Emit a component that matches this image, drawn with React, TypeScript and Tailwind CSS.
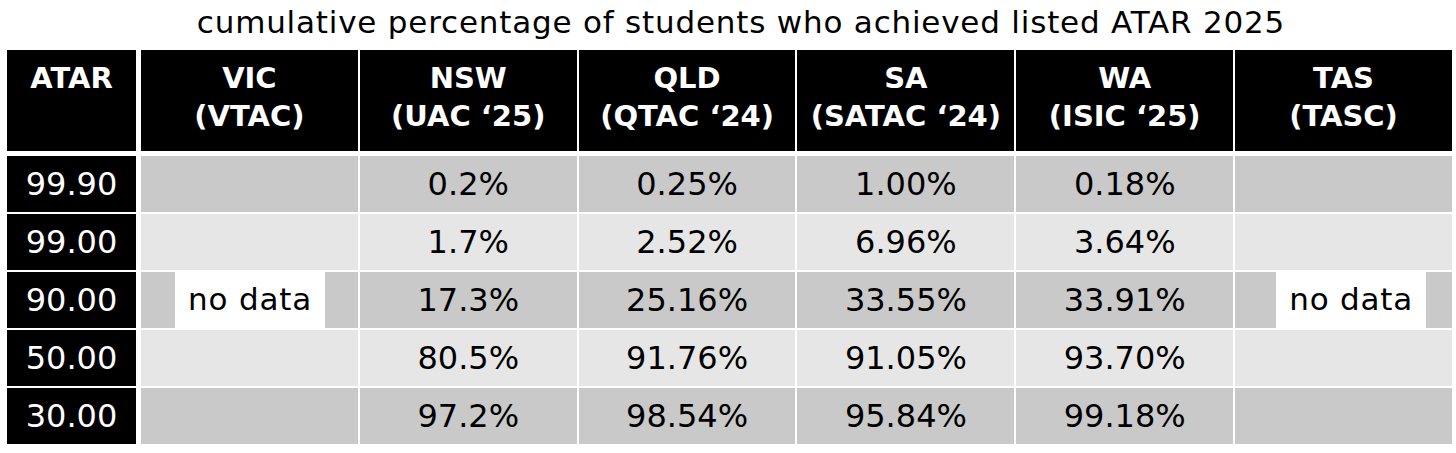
import React from "react";

const heads = [
  ["VIC", "(VTAC)"],
  ["NSW", "(UAC \u201825)"],
  ["QLD", "(QTAC \u201824)"],
  ["SA", "(SATAC \u201824)"],
  ["WA", "(ISIC \u201825)"],
  ["TAS", "(TASC)"],
];

const rows: { atar: string; vals: string[] }[] = [
  { atar: "99.90", vals: ["", "0.2%", "0.25%", "1.00%", "0.18%", ""] },
  { atar: "99.00", vals: ["", "1.7%", "2.52%", "6.96%", "3.64%", ""] },
  { atar: "90.00", vals: ["ND", "17.3%", "25.16%", "33.55%", "33.91%", "ND2"] },
  { atar: "50.00", vals: ["", "80.5%", "91.76%", "91.05%", "93.70%", ""] },
  { atar: "30.00", vals: ["", "97.2%", "98.54%", "95.84%", "99.18%", ""] },
];

const sans = '"DejaVu Sans", "Liberation Sans", sans-serif';

export default function App() {
  return (
    <div className="w-[1456px] h-[453px] bg-white text-black" style={{ fontFamily: sans }}>
      <div className="h-[50px] pt-[2px] pl-[26px] text-center text-[31px] leading-[40px] tracking-[0.8px] whitespace-nowrap">
        cumulative percentage of students who achieved listed ATAR 2025
      </div>
      <div className="ml-[7px] w-[1445px]">
        {/* header */}
        <div className="flex h-[101px]">
          <div className="w-[129px] bg-black text-white font-bold text-[29px] leading-[38px] text-center pt-[9px]">
            ATAR
          </div>
          <div className="ml-[5px] flex flex-1 gap-[2px]">
            {heads.map((h) => (
              <div
                key={h[0]}
                className="flex-1 bg-black text-white font-bold text-[29px] leading-[38px] text-center pt-[9px] whitespace-nowrap"
              >
                <div>{h[0]}</div>
                <div>{h[1]}</div>
              </div>
            ))}
          </div>
        </div>
        {/* body */}
        <div className="mt-[5px] flex flex-col gap-[2px]">
          {rows.map((r, i) => {
            const bg = i % 2 === 0 ? "bg-[#c9c9c9]" : "bg-[#e6e6e6]";
            return (
              <div key={r.atar} className="flex h-[56px]">
                <div className="w-[129px] bg-black text-white text-[32px] flex items-center justify-center">
                  {r.atar}
                </div>
                <div className="ml-[5px] flex flex-1 gap-[2px]">
                  {r.vals.map((v, j) => {
                    if (v === "ND" || v === "ND2") {
                      return (
                        <div key={j} className={`flex-1 ${bg} flex items-stretch`}>
                          <div
                            className={`-mt-[2px] w-[150px] bg-white flex items-center justify-center text-[31px] tracking-[0.8px] ${
                              v === "ND" ? "ml-[34px]" : "ml-[41px]"
                            }`}
                          >
                            no data
                          </div>
                        </div>
                      );
                    }
                    return (
                      <div
                        key={j}
                        className={`flex-1 ${bg} flex items-center justify-center text-[32px]`}
                      >
                        {v}
                      </div>
                    );
                  })}
                </div>
              </div>
            );
          })}
        </div>
      </div>
    </div>
  );
}
